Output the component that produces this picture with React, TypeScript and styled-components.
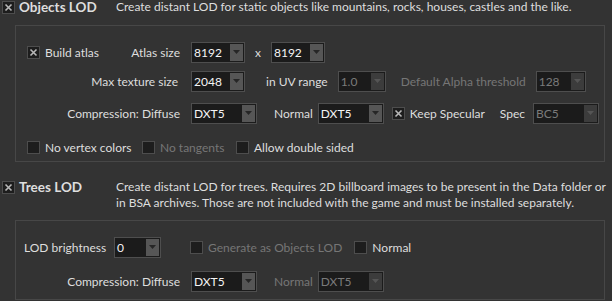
import styled, { createGlobalStyle } from 'styled-components'

const Global = createGlobalStyle`
    html, body {
        margin: 0;
        padding: 0;
        background: #333333;
    }
    body {
        font-family: Lato, "Noto Sans", sans-serif;
        font-size: 12px;
        color: #dedede;
    }
`

const Page = styled.div`
    width: 612px;
    height: 301px;
    overflow: hidden;
    background: #333333;
`

const Header = styled.div<{ $top: number; $h: number }>`
    display: flex;
    align-items: flex-start;
    margin-top: ${p => p.$top}px;
    padding-left: 2px;
    height: ${p => p.$h}px;
`

const Title = styled.div`
    display: flex;
    align-items: center;
    gap: 4px;
    width: 114px;
    font-weight: bold;
    font-size: 13.5px;
    line-height: 13px;
`

const Desc = styled.div`
    line-height: 16px;
    margin-top: -2px;
    white-space: nowrap;
`

const Group = styled.div<{ $height: number }>`
    margin-left: 15px;
    width: 590px;
    height: ${p => p.$height}px;
    border: 1px solid #474747;
    box-sizing: border-box;
    padding: 15px 0 0 11px;
`

const Row = styled.div<{ $gap?: number }>`
    display: flex;
    align-items: center;
    height: 22px;
    margin-bottom: ${p => p.$gap ?? 8}px;
`

const Label = styled.div<{ $w?: number; $right?: boolean; $off?: boolean; $ml?: number }>`
    width: ${p => (p.$w ? `${p.$w}px` : 'auto')};
    margin-left: ${p => p.$ml ?? 0}px;
    text-align: ${p => (p.$right ? 'right' : 'left')};
    color: ${p => (p.$off ? '#767676' : '#dedede')};
    white-space: nowrap;
    flex: none;
`

const CheckWrap = styled.div<{ $ml?: number; $w?: number }>`
    display: flex;
    align-items: center;
    gap: 5px;
    margin-left: ${p => p.$ml ?? 0}px;
    width: ${p => (p.$w ? `${p.$w}px` : 'auto')};
    flex: none;
`

const Box = styled.div`
    width: 11px;
    height: 11px;
    border: 1px solid #4d4d4d;
    background: #1d1d1d;
    display: flex;
    align-items: center;
    justify-content: center;
    flex: none;
`

const ComboBox = styled.div<{ $w: number; $ml?: number }>`
    width: ${p => p.$w}px;
    height: 21px;
    margin-left: ${p => p.$ml ?? 0}px;
    box-sizing: border-box;
    border: 1px solid #4e4e4e;
    background: #1b1b1b;
    display: flex;
    align-items: stretch;
    flex: none;
`

const ComboText = styled.div<{ $off?: boolean }>`
    flex: 1;
    padding-left: 2px;
    line-height: 19px;
    color: ${p => (p.$off ? '#7a7a7a' : '#f4f4f4')};
`

const ComboButton = styled.div<{ $off?: boolean }>`
    width: 13px;
    margin: 1px;
    background: ${p => (p.$off ? '#3c3c3c' : '#565656')};
    display: flex;
    align-items: center;
    justify-content: center;
`

function Check({ on, off, text, ml, w }: { on?: boolean; off?: boolean; text?: string; ml?: number; w?: number }) {
    return (
        <CheckWrap $ml={ml} $w={w}>
            <Box>
                {on && (
                    <svg width="9" height="9" viewBox="0 0 9 9">
                        <path d="M1.5 1.5 L7.5 7.5 M7.5 1.5 L1.5 7.5" stroke="#b8b8b8" strokeWidth="1.6" />
                    </svg>
                )}
            </Box>
            {text && <Label $off={off}>{text}</Label>}
        </CheckWrap>
    )
}

function Combo({ value, w, ml, off }: { value: string; w: number; ml?: number; off?: boolean }) {
    return (
        <ComboBox $w={w} $ml={ml}>
            <ComboText $off={off}>{value}</ComboText>
            <ComboButton $off={off}>
                <svg width="7" height="4" viewBox="0 0 7 4">
                    <path d="M0 0 H7 L3.5 4 Z" fill={off ? '#555' : '#262626'} />
                </svg>
            </ComboButton>
        </ComboBox>
    )
}

export default function App() {
    return (
        <Page>
            <Global />
            <Header $top={1} $h={24}>
                <Title>
                    <Check on />
                    Objects LOD
                </Title>
                <Desc>Create distant LOD for static objects like mountains, rocks, houses, castles and the like.</Desc>
            </Header>
            <Group $height={137}>
                <Row $gap={7}>
                    <Check on text="Build atlas" w={104} />
                    <Label $w={49} $right>Atlas size</Label>
                    <Combo value="8192" w={54} ml={11} />
                    <Label $ml={10}>x</Label>
                    <Combo value="8192" w={54} ml={10} />
                </Row>
                <Row $gap={10}>
                    <Label $w={151} $right>Max texture size</Label>
                    <Combo value="2048" w={54} ml={13} />
                    <Label $ml={21}>in UV range</Label>
                    <Combo value="1.0" w={48} ml={10} off />
                    <Label $ml={15} $off>Default Alpha threshold</Label>
                    <Combo value="128" w={50} ml={10} off />
                </Row>
                <Row $gap={12}>
                    <Label $w={153} $right>Compression: Diffuse</Label>
                    <Combo value="DXT5" w={66} ml={11} />
                    <Label $ml={17}>Normal</Label>
                    <Combo value="DXT5" w={66} ml={5} />
                    <Check on text="Keep Specular" ml={8} />
                    <Label $ml={15}>Spec</Label>
                    <Combo value="BC5" w={66} ml={8} off />
                </Row>
                <Row>
                    <Check text="No vertex colors" w={115} />
                    <Check text="No tangents" off w={94} />
                    <Check text="Allow double sided" />
                </Row>
            </Group>
            <Header $top={19} $h={39}>
                <Title>
                    <Check on />
                    Trees LOD
                </Title>
                <Desc>
                    Create distant LOD for trees. Requires 2D billboard images to be present in the Data folder or
                    <br />
                    in BSA archives. Those are not included with the game and must be installed separately.
                </Desc>
            </Header>
            <Group $height={80}>
                <Row $gap={12}>
                    <Label $w={81} $ml={-3}>LOD brightness</Label>
                    <Combo value="0" w={47} ml={9} />
                    <Check text="Generate as Objects LOD" off ml={29} />
                    <Check text="Normal" ml={12} />
                </Row>
                <Row>
                    <Label $w={153} $right>Compression: Diffuse</Label>
                    <Combo value="DXT5" w={66} ml={11} />
                    <Label $ml={17} $off>Normal</Label>
                    <Combo value="DXT5" w={66} ml={5} off />
                </Row>
            </Group>
        </Page>
    )
}
